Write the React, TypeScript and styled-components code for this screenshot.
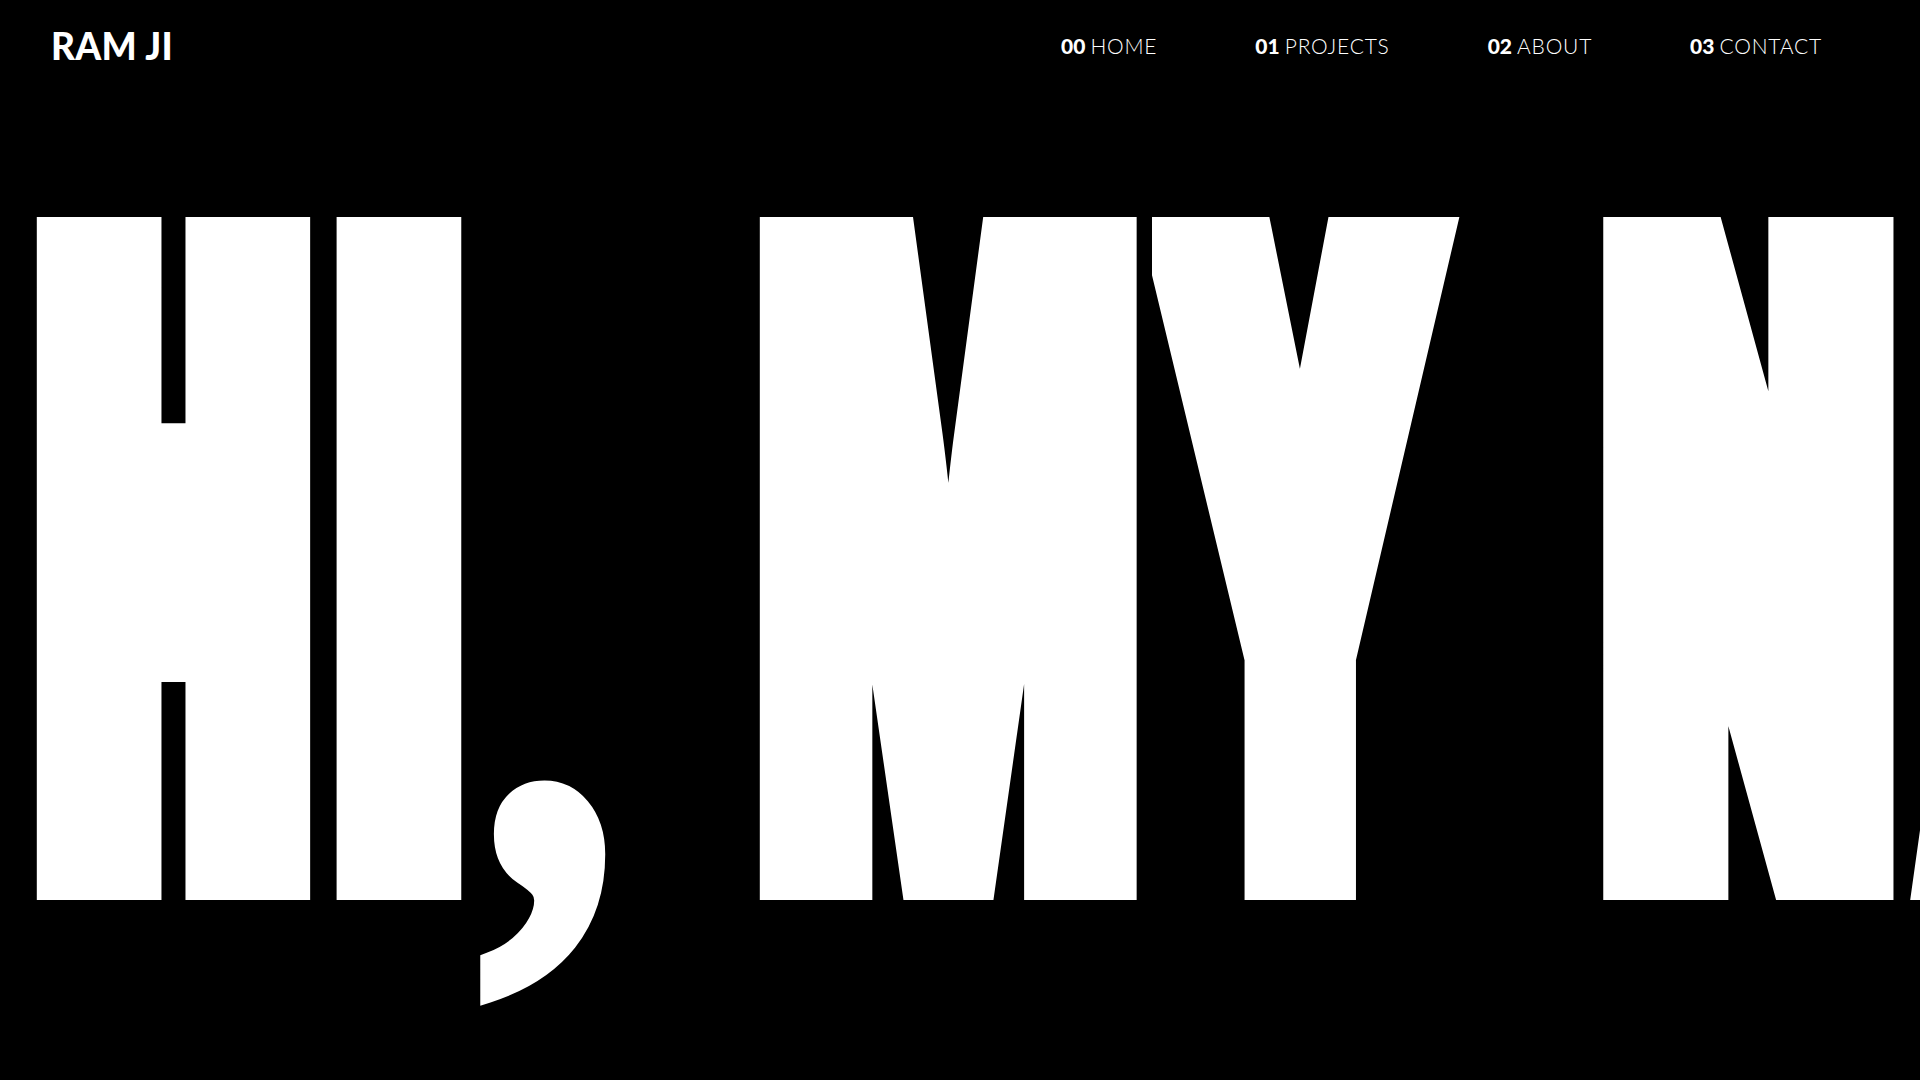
import React from "react";
import styled, { createGlobalStyle } from "styled-components";

const Global = createGlobalStyle`
  html, body {
    margin: 0;
    padding: 0;
    background: #000;
    overflow: hidden;
  }
  * { box-sizing: border-box; }
`;

const CAP = 683;
const BASE_STROKE = 90;
const sizeFor = (stroke: number) => (CAP - stroke) / 0.7275;

const Page = styled.div`
  width: 1920px;
  height: 1080px;
  background: #000;
  color: #fff;
  overflow: hidden;
  display: flex;
  flex-direction: column;
`;

const Header = styled.header`
  height: 91px;
  flex: none;
  display: flex;
  align-items: center;
  padding: 0 98px 0 51px;
`;

const Logo = styled.a`
  font-family: "Lato", "Liberation Sans", sans-serif;
  font-weight: 900;
  font-size: 37px;
  line-height: 1;
  color: #fff;
  text-decoration: none;
  letter-spacing: 0.3px;
`;

const Nav = styled.nav`
  margin-left: auto;
  display: flex;
  align-items: center;
  gap: 98px;
`;

const NavItem = styled.a`
  font-family: "Lato", "Liberation Sans", sans-serif;
  font-weight: 300;
  font-size: 21px;
  line-height: 1;
  color: #fff;
  text-decoration: none;
  white-space: nowrap;
  letter-spacing: 0.8px;
  b {
    font-weight: 900;
    letter-spacing: 0;
    margin-right: 5px;
  }
`;

const Hero = styled.section`
  flex: 1;
  overflow: hidden;
  padding-left: 52px;
`;

const BigText = styled.h1`
  margin: 60px 0 0;
  font-family: "Inter", "Liberation Sans", sans-serif;
  font-weight: 900;
  font-size: ${sizeFor(BASE_STROKE)}px;
  line-height: 1;
  white-space: nowrap;
  color: #fff;
  -webkit-text-stroke: ${BASE_STROKE}px #fff;
  letter-spacing: 131px;
  transform-origin: left top;
  transform: scaleX(0.434);
`;

const Glyph = styled.span<{ $stroke: number; $sx?: number; $shift?: number }>`
  display: inline-block;
  font-size: ${(p) => sizeFor(p.$stroke)}px;
  -webkit-text-stroke-width: ${(p) => p.$stroke}px;
  line-height: 0;
  vertical-align: ${(p) => (p.$stroke - BASE_STROKE) / 2}px;
  margin-left: ${(p) => p.$shift ?? 0}px;
  transform-origin: left center;
  transform: scaleX(${(p) => p.$sx ?? 1});
`;

const Comma = styled.span`
  display: inline-block;
  font-family: "Liberation Serif", serif;
  font-weight: 700;
  font-size: 670px;
  line-height: 0;
  letter-spacing: 0;
  -webkit-text-stroke-width: 20px;
  vertical-align: -34px;
  margin-left: -50px;
  transform-origin: left center;
  transform: scaleX(1.88);
`;

const items = [
  { n: "00", label: "HOME" },
  { n: "01", label: "PROJECTS" },
  { n: "02", label: "ABOUT" },
  { n: "03", label: "CONTACT" },
];

export default function App() {
  return (
    <Page>
      <Global />
      <Header>
        <Logo href="#">RAM JI</Logo>
        <Nav>
          {items.map((it) => (
            <NavItem key={it.n} href="#">
              <b>{it.n}</b>
              {it.label}
            </NavItem>
          ))}
        </Nav>
      </Header>
      <Hero>
        <BigText>
          <Glyph $stroke={140}>HI</Glyph><Comma>,</Comma>{" "}<Glyph $stroke={70} $sx={1.09} $shift={176}>M</Glyph><Glyph $stroke={110} $sx={0.97} $shift={14}>Y</Glyph>{" "}<Glyph $stroke={120} $sx={1.04} $shift={-13}>N</Glyph>AME IS RAM JI
        </BigText>
      </Hero>
    </Page>
  );
}
